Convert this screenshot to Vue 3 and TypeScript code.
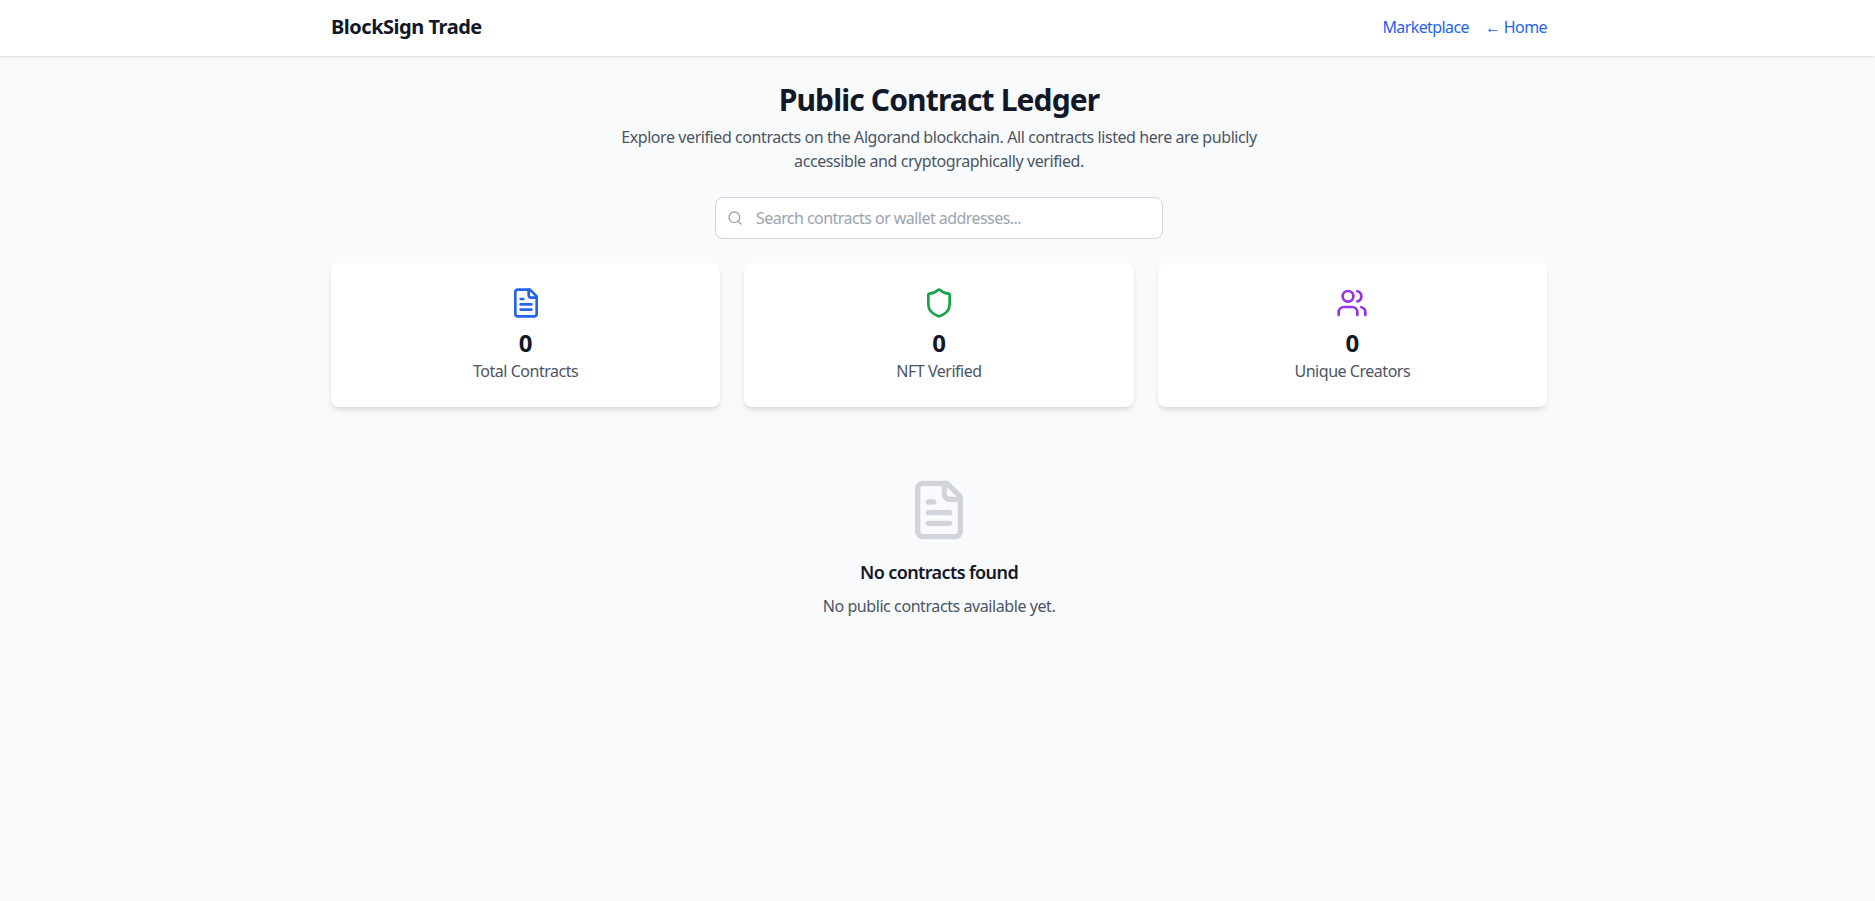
<script setup lang="ts">
import { ref } from 'vue'

type Stat = {
  label: string
  value: number
  tone: string
  paths: string[]
  circle?: boolean
}

const stats: Stat[] = [
  {
    label: 'Total Contracts',
    value: 0,
    tone: 'blue',
    paths: [
      'M15 2H6a2 2 0 0 0-2 2v16a2 2 0 0 0 2 2h12a2 2 0 0 0 2-2V7Z',
      'M14 2v4a2 2 0 0 0 2 2h4',
      'M10 9H8',
      'M16 13H8',
      'M16 17H8',
    ],
  },
  {
    label: 'NFT Verified',
    value: 0,
    tone: 'green',
    paths: [
      'M20 13c0 5-3.5 7.5-7.66 8.95a1 1 0 0 1-.67-.01C7.5 20.5 4 18 4 13V6a1 1 0 0 1 1-1c2 0 4.5-1.2 6.24-2.72a1.17 1.17 0 0 1 1.52 0C14.51 3.81 17 5 19 5a1 1 0 0 1 1 1z',
    ],
  },
  {
    label: 'Unique Creators',
    value: 0,
    tone: 'purple',
    circle: true,
    paths: [
      'M16 21v-2a4 4 0 0 0-4-4H6a4 4 0 0 0-4 4v2',
      'M22 21v-2a4 4 0 0 0-3-3.87',
      'M16 3.13a4 4 0 0 1 0 7.75',
    ],
  },
]

const query = ref('')
</script>

<template>
  <div class="page">
    <header class="topbar">
      <div class="topbar-inner">
        <span class="brand">BlockSign Trade</span>
        <nav class="links">
          <a href="#">Marketplace</a>
          <a href="#">← Home</a>
        </nav>
      </div>
    </header>

    <main class="content">
      <section class="intro">
        <h1>Public Contract Ledger</h1>
        <p>
          Explore verified contracts on the Algorand blockchain. All contracts listed here are
          publicly accessible and cryptographically verified.
        </p>
      </section>

      <div class="search">
        <svg class="search-icon" viewBox="0 0 24 24" fill="none" stroke="currentColor" stroke-width="2" stroke-linecap="round" stroke-linejoin="round">
          <circle cx="11" cy="11" r="8" />
          <path d="m21 21-4.3-4.3" />
        </svg>
        <input v-model="query" type="text" placeholder="Search contracts or wallet addresses..." />
      </div>

      <section class="stats">
        <article v-for="stat in stats" :key="stat.label" class="stat-card">
          <svg class="stat-icon" :class="stat.tone" viewBox="0 0 24 24" fill="none" stroke="currentColor" stroke-width="2" stroke-linecap="round" stroke-linejoin="round">
            <path v-for="d in stat.paths" :key="d" :d="d" />
            <circle v-if="stat.circle" cx="9" cy="7" r="4" />
          </svg>
          <strong>{{ stat.value }}</strong>
          <span>{{ stat.label }}</span>
        </article>
      </section>

      <section class="empty">
        <svg class="empty-icon" viewBox="0 0 24 24" fill="none" stroke="currentColor" stroke-width="2" stroke-linecap="round" stroke-linejoin="round">
          <path d="M15 2H6a2 2 0 0 0-2 2v16a2 2 0 0 0 2 2h12a2 2 0 0 0 2-2V7Z" />
          <path d="M14 2v4a2 2 0 0 0 2 2h4" />
          <path d="M10 9H8" />
          <path d="M16 13H8" />
          <path d="M16 17H8" />
        </svg>
        <h2>No contracts found</h2>
        <p>No public contracts available yet.</p>
      </section>
    </main>
  </div>
</template>

<style scoped>
.page {
  min-height: 901px;
  background: #f9fafb;
  font-family: 'Noto Sans', 'Open Sans', sans-serif;
  color: #111827;
}

.topbar {
  background: #fff;
  box-shadow: 0 1px 3px rgba(0, 0, 0, 0.1), 0 1px 2px -1px rgba(0, 0, 0, 0.1);
}

.topbar-inner {
  box-sizing: border-box;
  width: 1219px;
  height: 56px;
  margin: 0 auto;
  padding: 0 0 3px 3px;
  display: flex;
  align-items: center;
  justify-content: space-between;
}

.brand {
  font-size: 20px;
  font-weight: 700;
  line-height: 28px;
  letter-spacing: -0.48px;
}

.links {
  display: flex;
  gap: 16px;
}

.links a {
  color: #2563eb;
  text-decoration: none;
  font-size: 16px;
  line-height: 24px;
  letter-spacing: -0.6px;
}

.content {
  box-sizing: content-box;
  width: 1216px;
  margin: 0 auto;
  padding: 25px 0 0 3px;
}

.intro {
  text-align: center;
  margin-bottom: 24px;
}

.intro h1 {
  margin: 0 0 6px;
  font-size: 30px;
  line-height: 38px;
  font-weight: 700;
  letter-spacing: -0.87px;
}

.intro p {
  width: 672px;
  margin: 0 auto;
  font-size: 16px;
  line-height: 24px;
  letter-spacing: -0.42px;
  color: #4b5563;
}

.search {
  position: relative;
  width: 448px;
  margin: 0 auto 24px;
}

.search-icon {
  position: absolute;
  left: 12px;
  top: 13px;
  width: 16px;
  height: 16px;
  color: #9ca3af;
}

.search input {
  display: block;
  box-sizing: border-box;
  width: 100%;
  height: 42px;
  padding: 8px 16px 8px 40px;
  border: 1px solid #d1d5db;
  border-radius: 8px;
  background: #fff;
  font: inherit;
  font-size: 16px;
  letter-spacing: -0.55px;
  color: #111827;
  outline: none;
}

.search input::placeholder {
  color: #9ca3af;
}

.stats {
  display: grid;
  grid-template-columns: repeat(3, minmax(0, 1fr));
  gap: 24px;
}

.stat-card {
  display: flex;
  flex-direction: column;
  align-items: center;
  padding: 24px;
  background: #fff;
  border-radius: 8px;
  box-shadow: 0 4px 6px -1px rgba(0, 0, 0, 0.1), 0 2px 4px -2px rgba(0, 0, 0, 0.1);
}

.stat-icon {
  width: 32px;
  height: 32px;
  margin-bottom: 8px;
}

.stat-icon.blue {
  color: #2563eb;
}

.stat-icon.green {
  color: #16a34a;
}

.stat-icon.purple {
  color: #9333ea;
}

.stat-card strong {
  font-size: 24px;
  line-height: 32px;
  font-weight: 700;
}

.stat-card span {
  font-size: 16px;
  line-height: 24px;
  letter-spacing: -0.47px;
  color: #4b5563;
}

.empty {
  padding-top: 71px;
  text-align: center;
}

.empty-icon {
  display: block;
  width: 64px;
  height: 64px;
  margin: 0 auto 16px;
  color: #d1d5db;
}

.empty h2 {
  margin: 0 0 8px;
  font-size: 18px;
  line-height: 28px;
  font-weight: 600;
  letter-spacing: -0.6px;
}

.empty p {
  margin: 0;
  font-size: 16px;
  line-height: 24px;
  letter-spacing: -0.42px;
  color: #4b5563;
}
</style>

<style>
html,
body {
  margin: 0;
  background: #f9fafb;
}
</style>
